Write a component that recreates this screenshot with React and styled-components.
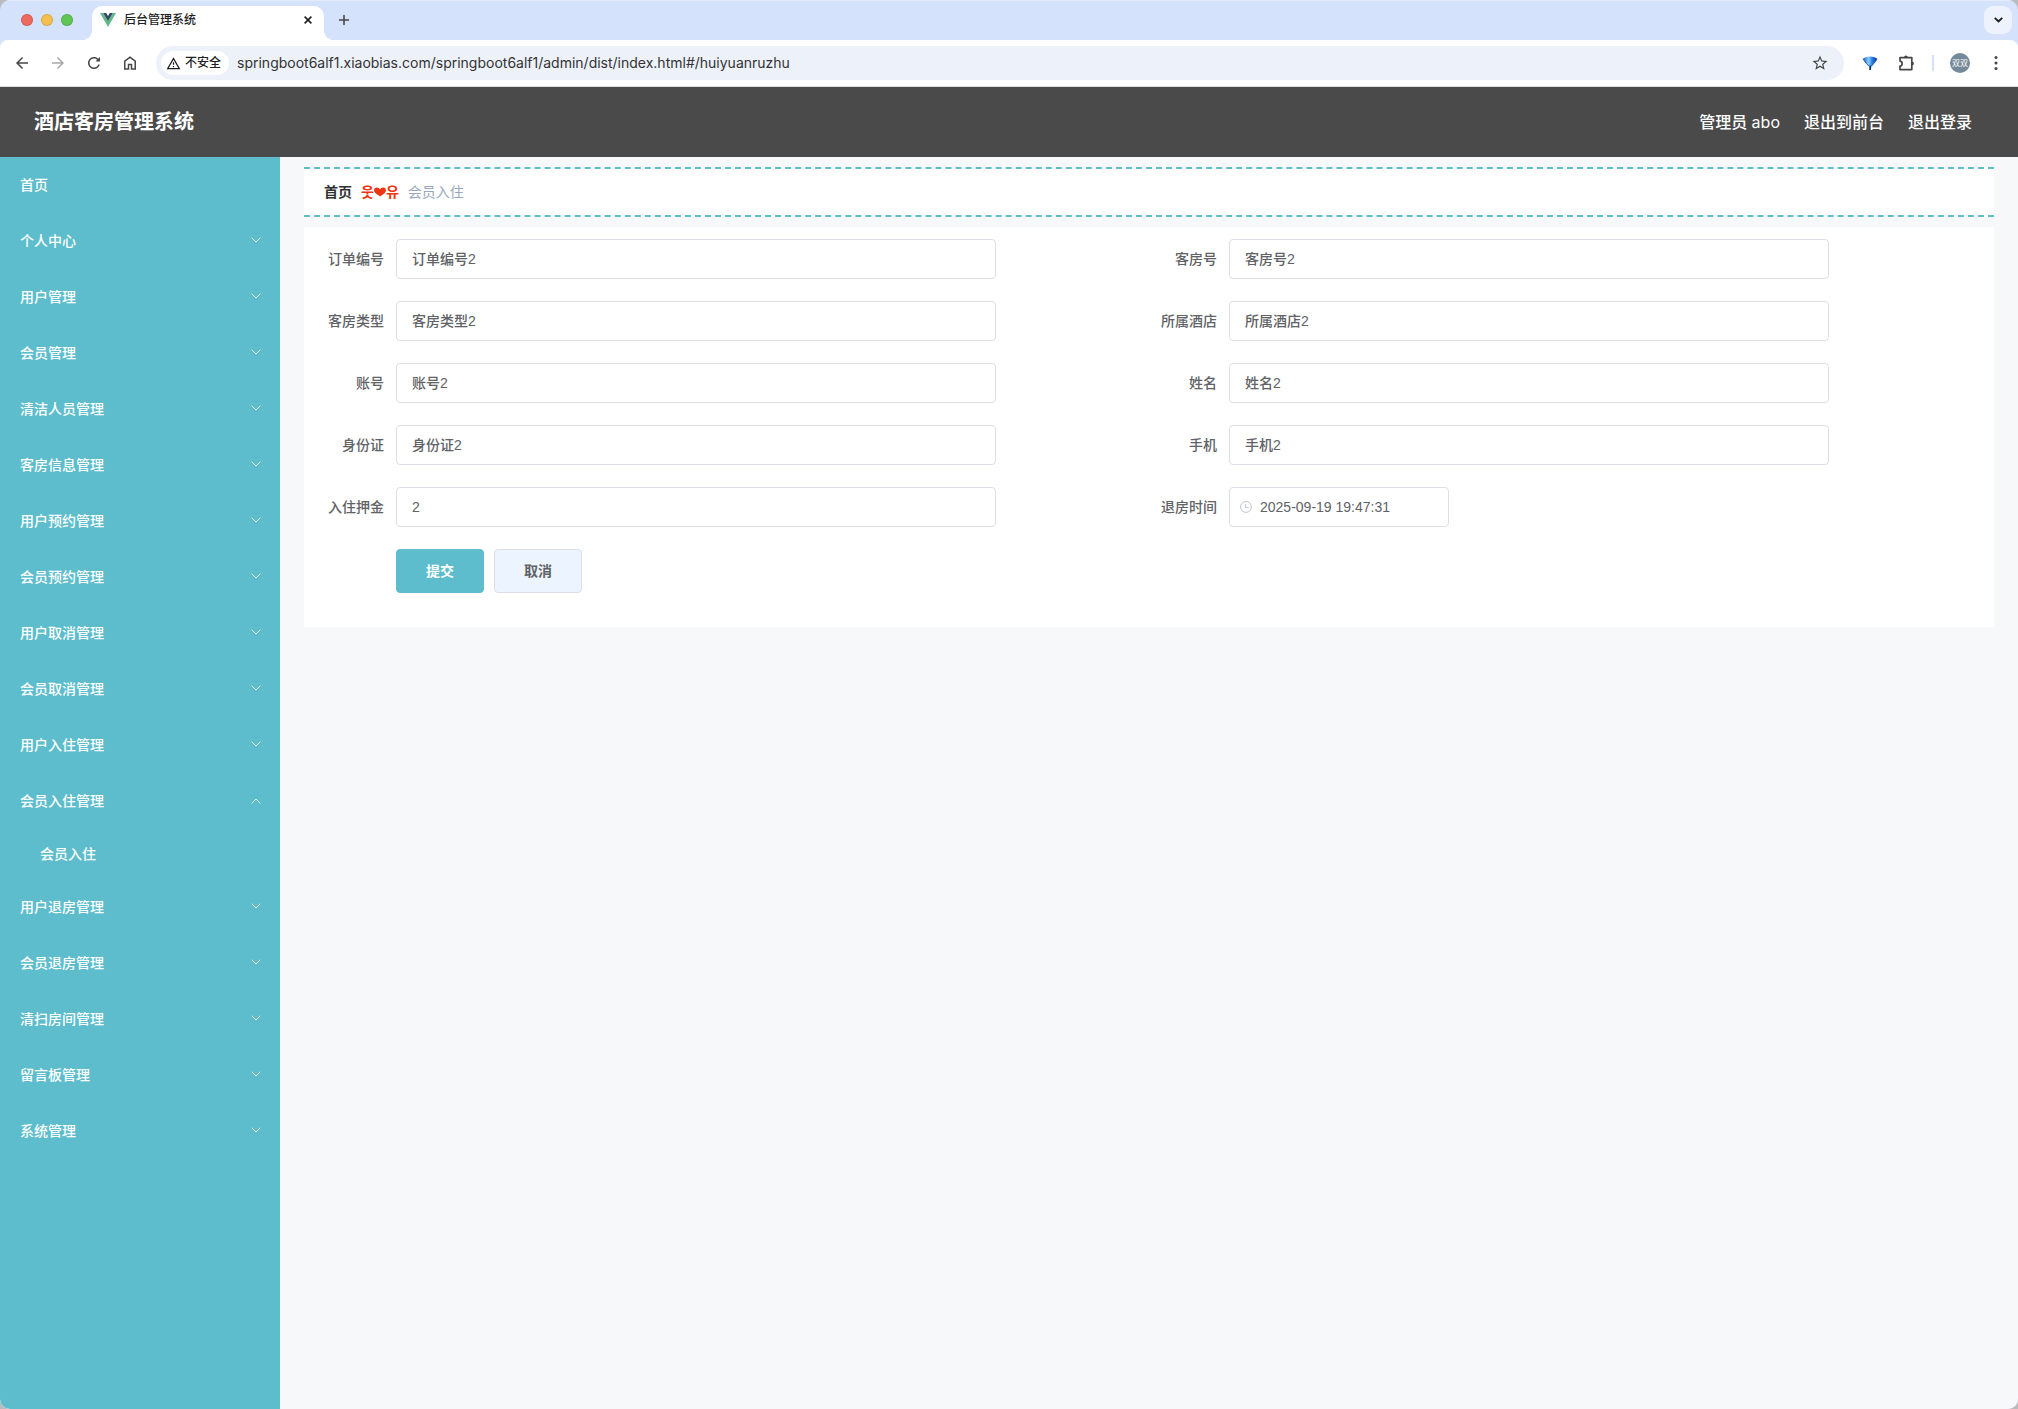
import React, { useState } from 'react'
import styled, { createGlobalStyle, css } from 'styled-components'

const menus = [
	{ title: '首页' },
	{ title: '个人中心', children: [] },
	{ title: '用户管理', children: [] },
	{ title: '会员管理', children: [] },
	{ title: '清洁人员管理', children: [] },
	{ title: '客房信息管理', children: [] },
	{ title: '用户预约管理', children: [] },
	{ title: '会员预约管理', children: [] },
	{ title: '用户取消管理', children: [] },
	{ title: '会员取消管理', children: [] },
	{ title: '用户入住管理', children: [] },
	{ title: '会员入住管理', children: ['会员入住'] },
	{ title: '用户退房管理', children: [] },
	{ title: '会员退房管理', children: [] },
	{ title: '清扫房间管理', children: [] },
	{ title: '留言板管理', children: [] },
	{ title: '系统管理', children: [] },
]

const fields = [
	{ name: 'dingdanbianhao', label: '订单编号', value: '订单编号2' },
	{ name: 'kefanghao', label: '客房号', value: '客房号2' },
	{ name: 'kefangleixing', label: '客房类型', value: '客房类型2' },
	{ name: 'suoshujiudian', label: '所属酒店', value: '所属酒店2' },
	{ name: 'zhanghao', label: '账号', value: '账号2' },
	{ name: 'xingming', label: '姓名', value: '姓名2' },
	{ name: 'shenfenzheng', label: '身份证', value: '身份证2' },
	{ name: 'shouji', label: '手机', value: '手机2' },
	{ name: 'ruzhuyajin', label: '入住押金', value: '2' },
	{ name: 'tuifangshijian', label: '退房时间', value: '2025-09-19 19:47:31', date: true },
]

const GlobalStyle = createGlobalStyle`
	* { box-sizing: border-box; }
	body {
		margin: 0;
		background: #b9bbbc;
		font-family: "Liberation Sans", "Noto Sans CJK SC", sans-serif;
		font-size: 14px;
		line-height: 20px;
	}
	button, input { font: inherit; }
	button { border: 0; padding: 0; background: none; cursor: pointer; }
	a { color: inherit; text-decoration: none; }
	svg { display: block; flex: none; }
`

// Browser window

const Window = styled.div`
	display: flex;
	flex-direction: column;
	min-height: 100vh;
	border-radius: 10px;
	overflow: hidden;
	background: #d5e2fc;
`

const TabStrip = styled.div`
	display: flex;
	align-items: center;
	height: 40px;
	padding: 0 6px 0 21px;
	box-shadow: inset 0 1px #e3ebfb;
`

const Lights = styled.div`
	display: flex;
	gap: 8px;
	margin-right: 19px;
`

const Light = styled.button`
	width: 12px;
	height: 12px;
	border-radius: 50%;
	background: ${p => p.$color};
	box-shadow: inset 0 0 0 1px rgba(0, 0, 0, 0.12);
`

const Tab = styled.div`
	position: relative;
	display: flex;
	align-items: center;
	align-self: flex-end;
	width: 232px;
	height: 34px;
	padding: 0 8px;
	border-radius: 10px 10px 0 0;
	background: #fff;
	color: #1f1f1f;
	font: 500 12px/20px Inter, "Noto Sans CJK SC", sans-serif;
	&::before, &::after {
		content: '';
		position: absolute;
		bottom: 0;
		width: 10px;
		height: 10px;
	}
	&::before {
		left: -10px;
		background: radial-gradient(circle at 0 0, transparent 10px, #fff 10px);
	}
	&::after {
		right: -10px;
		background: radial-gradient(circle at 100% 0, transparent 10px, #fff 10px);
	}
`

const TabTitle = styled.span`
	flex: 1;
	margin-left: 8px;
	padding-bottom: 6px;
`

const TabPart = styled.span`
	display: flex;
	padding-bottom: 6px;
`

const IconButton = styled.button`
	display: flex;
	align-items: center;
	justify-content: center;
	width: ${p => p.$width || 36}px;
	height: ${p => p.$height || 34}px;
	flex: none;
	color: ${p => p.$faded ? '#a9a9a9' : '#474747'};
`

const SearchTabs = styled(IconButton)`
	margin-left: auto;
	border-radius: 9px;
	background: #edf2fd;
	color: #1f1f1f;
`

const Toolbar = styled.div`
	display: flex;
	align-items: center;
	height: 47px;
	padding: 0 4px;
	border-bottom: 1px solid #dcdcdc;
	border-radius: 8px 8px 0 0;
	background: #fff;
`

const AddressBar = styled.div`
	display: flex;
	align-items: center;
	flex: 1;
	height: 34px;
	margin: 0 8px;
	padding: 0 6px 0 5px;
	border-radius: 17px;
	background: #edf1fa;
`

const SiteChip = styled.button`
	display: flex;
	align-items: center;
	gap: 4px;
	height: 24px;
	padding: 0 8px 0 5px;
	border-radius: 12px;
	background: #fff;
	color: #1f1f1f;
	font: 500 12px/20px Inter, "Noto Sans CJK SC", sans-serif;
`

const UrlInput = styled.input`
	flex: 1;
	min-width: 0;
	height: 34px;
	padding: 0 8px 2px;
	border: 0;
	outline: none;
	background: none;
	color: #333;
	font: 14px Inter, sans-serif;
`

const ToolbarDivider = styled.span`
	width: 2px;
	height: 16px;
	margin: 0 8px;
	background: #d5e2fc;
`

const Avatar = styled.span`
	width: 20px;
	border-radius: 50%;
	background: #74899a;
	color: #fff;
	font: 8px/20px Inter, "Noto Sans CJK SC", sans-serif;
	text-align: center;
`

// Admin page

const Header = styled.header`
	display: flex;
	align-items: center;
	gap: 24px;
	height: 70px;
	padding: 0 46px 0 34px;
	background: #4a4a4a;
	color: #fff;
	font: 500 16px/24px Inter, "Noto Sans CJK SC", sans-serif;
`

const SystemName = styled.h1`
	flex: 1;
	margin: 0;
	font-size: 20px;
	font-weight: 700;
`

const UserName = styled.span`
	font-weight: 400;
`

const Body = styled.div`
	display: flex;
	flex: 1;
	background: #f6f8fa;
`

const Sidebar = styled.nav`
	flex: none;
	width: 280px;
	background: #5dbdcc;
	color: #fff;
	font-weight: 500;
`

const menuRow = css`
	display: flex;
	align-items: center;
	justify-content: space-between;
	width: 100%;
	height: 56px;
	padding: 0 19px 0 20px;
	color: #fff;
	font-weight: 500;
`

const MenuLink = styled.a`
	${menuRow}
`

const MenuButton = styled.button`
	${menuRow}
	svg {
		margin-bottom: ${p => p.$open ? 0 : 2}px;
		transform: ${p => p.$open ? 'rotate(180deg)' : 'none'};
	}
`

const SubMenuLink = styled.a`
	${menuRow}
	height: 50px;
	padding-left: 40px;
`

const Main = styled.main`
	flex: 1;
	min-width: 0;
	padding: 10px 24px;
`

const Breadcrumb = styled.div`
	display: flex;
	align-items: center;
	gap: 9px;
	height: 50px;
	padding: 0 20px;
	border-top: 2px dashed #5dbdcc;
	border-bottom: 2px dashed #5dbdcc;
	background: #fff;
	color: #97a8be;
	a { color: #303133; font-weight: 700; }
`

const Separator = styled.span`
	display: flex;
	align-items: center;
	color: #f03514;
	font-family: "Liberation Sans", "Noto Sans CJK KR", sans-serif;
	font-weight: 700;
`

const FormCard = styled.form`
	margin-top: 10px;
	padding: 12px 12px 34px;
	background: #fff;
	color: #606266;
`

const Fields = styled.div`
	display: grid;
	grid-template-columns: 1fr 1fr;
	row-gap: 22px;
`

const Field = styled.div`
	display: flex;
	align-items: center;
`

const FieldLabel = styled.label`
	flex: none;
	width: 80px;
	padding-right: 12px;
	text-align: right;
	font-weight: 500;
`

const InputBox = styled.div`
	display: flex;
	align-items: center;
	flex: 1;
	gap: 8px;
	height: 40px;
	max-width: ${p => p.$date ? 220 : 600}px;
	padding: ${p => p.$date ? '0 10px' : '0 15px'};
	border: 1px solid #dcdfe6;
	border-radius: 4px;
	color: #c0c4cc;
	&:focus-within { border-color: #5dbdcc; }
`

const TextInput = styled.input`
	flex: 1;
	min-width: 0;
	height: 20px;
	padding: 0;
	border: 0;
	outline: none;
	background: none;
	color: #606266;
	font-weight: 500;
`

const Actions = styled.div`
	display: flex;
	gap: 10px;
	margin: 22px 0 0 80px;
`

const ActionButton = styled.button`
	width: 88px;
	height: 44px;
	border: 1px solid ${p => p.$primary ? '#5dbdcc' : '#dcdfe6'};
	border-radius: 4px;
	background: ${p => p.$primary ? '#5dbdcc' : '#ecf4ff'};
	color: ${p => p.$primary ? '#fff' : '#606266'};
	font-weight: 700;
`

// Filled 24-grid icon
const Icon = ({ d, size = 18 }) => (
	<svg width={size} height={size} viewBox='0 0 24 24' fill='currentColor'>
		<path d={d} />
	</svg>
)

const paths = {
	back: 'M20 11H7.83l5.59-5.59L12 4l-8 8 8 8 1.41-1.41L7.83 13H20v-2z',
	forward: 'M12 4l-1.41 1.41L16.17 11H4v2h12.17l-5.58 5.59L12 20l8-8z',
	reload: 'M17.65 6.35C16.2 4.9 14.21 4 12 4c-4.42 0-7.99 3.58-7.99 8s3.57 8 7.99 8c3.73 0 6.84-2.55 7.73-6h-2.08c-.82 2.33-3.04 4-5.65 4-3.31 0-6-2.69-6-6s2.69-6 6-6c1.66 0 3.14.69 4.22 1.78L14 10h6V4l-2.35 2.35z',
	home: 'M6 19h3v-6h6v6h3v-9l-6-4.5L6 10v9zm-2 2V9l8-6 8 6v12h-7v-6h-2v6H4z',
	warning: 'M12 5.99 19.53 19H4.47L12 5.99M12 2 1 21h22L12 2zm1 14h-2v2h2v-2zm0-6h-2v4h2v-4z',
	star: 'M22 9.24l-7.19-.62L12 2 9.19 8.63 2 9.24l5.46 4.73L5.82 21 12 17.27 18.18 21l-1.63-7.03L22 9.24zM12 15.4l-3.76 2.27 1-4.28-3.32-2.88 4.38-.38L12 6.1l1.71 4.04 4.38.38-3.32 2.88 1 4.28L12 15.4z',
}

const VueLogo = () => (
	<svg width='16' height='14' viewBox='0 0 16 14'>
		<path d='M0 0h3.2L8 8.3 12.8 0H16L8 14z' fill='#5fb98c' />
		<path d='M3.2 0h3L8 3.1 9.8 0h3L8 8.3z' fill='#35495e' />
	</svg>
)

const Cross = () => (
	<svg width='8' height='8' viewBox='0 0 8 8' fill='none' stroke='#1f1f1f' strokeWidth='1.6'>
		<path d='M0.6 0.6 7.4 7.4M7.4 0.6 0.6 7.4' />
	</svg>
)

const Plus = () => (
	<svg width='10' height='10' viewBox='0 0 10 10' fill='none' stroke='#474747' strokeWidth='1.6'>
		<path d='M5 0v10M0 5h10' />
	</svg>
)

const TabsArrow = () => (
	<svg width='9' height='6' viewBox='0 0 9 6' fill='none' stroke='currentColor' strokeWidth='1.9'>
		<path d='M0.8 0.8 4.5 4.5 8.2 0.8' />
	</svg>
)

const FanIcon = () => (
	<svg width='16' height='16' viewBox='0 0 16 16'>
		<defs>
			<linearGradient id='fan' x1='0' y1='0' x2='1' y2='0'>
				<stop offset='0' stopColor='#1c62c4' />
				<stop offset='0.4' stopColor='#8ccbff' />
				<stop offset='0.62' stopColor='#2f86ee' />
				<stop offset='1' stopColor='#0a358f' />
			</linearGradient>
		</defs>
		<path d='M1.2 3.6 3.6 2.2Q8 0.9 12.6 2.2L15 3.6Q14.800 5.400 9.600 11L8.900 15H7.500L6.700 11Q1.600 5.600 1.200 3.600z' fill='url(#fan)' />
		<path d='M1.200 3.600Q1.600 5.600 6.700 11M15 3.600Q14.800 5.400 9.600 11' fill='none' stroke='#174a9c' strokeWidth='0.9' />
		<path d='M8.200 10.500V15' stroke='#14305e' strokeWidth='1.6' />
	</svg>
)

const PuzzleIcon = () => (
	<svg width='20' height='20' viewBox='0 0 20 20'>
		<path
			d='M4 4.600H15.800V16.600H4V13.200a2.600 2.600 0 0 0 0-5.100z'
			fill='none' stroke='currentColor' strokeWidth='1.700' strokeLinejoin='round'
		/>
		<path d='M8 4.400a1.900 1.900 0 0 1 3.800 0zM16 8.600a1.900 1.900 0 0 1 0 3.800z' fill='currentColor' />
	</svg>
)

const Dots = () => (
	<svg width='4' height='14' viewBox='0 0 4 14' fill='currentColor'>
		<circle cx='2' cy='1.6' r='1.5' />
		<circle cx='2' cy='7' r='1.5' />
		<circle cx='2' cy='12.4' r='1.5' />
	</svg>
)

const Chevron = () => (
	<svg width='10' height='6' viewBox='0 0 10 6' fill='none' stroke='#e6f6f8' strokeWidth='1'>
		<path d='M0.7 0.7 5 5 9.3 0.7' />
	</svg>
)

const Heart = () => (
	<svg width='12' height='10' viewBox='0 0 12 10' fill='currentColor'>
		<path d='M6.200 9.600C4.800 7.800 0 6.400 0 3.200 0 1.400 1.300 0.400 2.900 0.400c1.500 0 2.600.8 3.100 2C6.500 1.200 7.600.4 9.100.4 10.700.4 12 1.400 12 3.200c0 3.200-4.400 4.600-5.800 6.400z' />
	</svg>
)

const Clock = () => (
	<svg width='12' height='12' viewBox='0 0 12 12' fill='none' stroke='currentColor'>
		<circle cx='6' cy='6' r='5.4' />
		<path d='M5.7 3v3.500h3' />
	</svg>
)

const Browser = ({ children }) => (
	<Window>
		<TabStrip>
			<Lights>
				<Light $color='#ec6a5e' aria-label='关闭' />
				<Light $color='#f4bf4f' aria-label='最小化' />
				<Light $color='#61c554' aria-label='缩放' />
			</Lights>
			<Tab>
				<TabPart><VueLogo /></TabPart>
				<TabTitle>后台管理系统</TabTitle>
				<TabPart>
					<IconButton $width={16} $height={16} aria-label='关闭标签页'><Cross /></IconButton>
				</TabPart>
			</Tab>
			<IconButton $width={40} aria-label='新标签页'><Plus /></IconButton>
			<SearchTabs $width={28} $height={28} aria-label='搜索标签页'><TabsArrow /></SearchTabs>
		</TabStrip>
		<Toolbar>
			<IconButton aria-label='后退'><Icon d={paths.back} /></IconButton>
			<IconButton $faded aria-label='前进'><Icon d={paths.forward} /></IconButton>
			<IconButton aria-label='重新加载'><Icon d={paths.reload} /></IconButton>
			<IconButton aria-label='主页'><Icon d={paths.home} /></IconButton>
			<AddressBar>
				<SiteChip><Icon d={paths.warning} size={15} />不安全</SiteChip>
				<UrlInput
					aria-label='地址'
					defaultValue='springboot6alf1.xiaobias.com/springboot6alf1/admin/dist/index.html#/huiyuanruzhu'
				/>
				<IconButton aria-label='收藏'><Icon d={paths.star} /></IconButton>
			</AddressBar>
			<IconButton aria-label='扩展'><FanIcon /></IconButton>
			<IconButton aria-label='扩展程序'><PuzzleIcon /></IconButton>
			<ToolbarDivider />
			<IconButton><Avatar>双双</Avatar></IconButton>
			<IconButton aria-label='更多'><Dots /></IconButton>
		</Toolbar>
		{children}
	</Window>
)

const SideMenu = () => {
	const [opened, setOpened] = useState('会员入住管理')

	return (
		<Sidebar>
			{menus.map(menu => {
				if (!menu.children) {
					return <MenuLink key={menu.title} href='#/'>{menu.title}</MenuLink>
				}
				const open = opened === menu.title
				return (
					<React.Fragment key={menu.title}>
						<MenuButton
							$open={open}
							aria-expanded={open}
							onClick={() => setOpened(open ? '' : menu.title)}
						>
							{menu.title}
							<Chevron />
						</MenuButton>
						{open && menu.children.map(child => (
							<SubMenuLink key={child} href='#/huiyuanruzhu'>{child}</SubMenuLink>
						))}
					</React.Fragment>
				)
			})}
		</Sidebar>
	)
}

const CheckInForm = () => (
	<FormCard onSubmit={e => e.preventDefault()}>
		<Fields>
			{fields.map(field => (
				<Field key={field.name}>
					<FieldLabel htmlFor={field.name}>{field.label}</FieldLabel>
					<InputBox $date={field.date}>
						{field.date && <Clock />}
						<TextInput id={field.name} name={field.name} defaultValue={field.value} />
					</InputBox>
				</Field>
			))}
		</Fields>
		<Actions>
			<ActionButton type='submit' $primary>提交</ActionButton>
			<ActionButton type='button'>取消</ActionButton>
		</Actions>
	</FormCard>
)

const App = () => (
	<>
		<GlobalStyle />
		<Browser>
			<Header>
				<SystemName>酒店客房管理系统</SystemName>
				<span>管理员 <UserName>abo</UserName></span>
				<a href='#/front'>退出到前台</a>
				<a href='#/login'>退出登录</a>
			</Header>
			<Body>
				<SideMenu />
				<Main>
					<Breadcrumb>
						<a href='#/'>首页</a>
						<Separator>웃<Heart />유</Separator>
						<span>会员入住</span>
					</Breadcrumb>
					<CheckInForm />
				</Main>
			</Body>
		</Browser>
	</>
)

export default App
